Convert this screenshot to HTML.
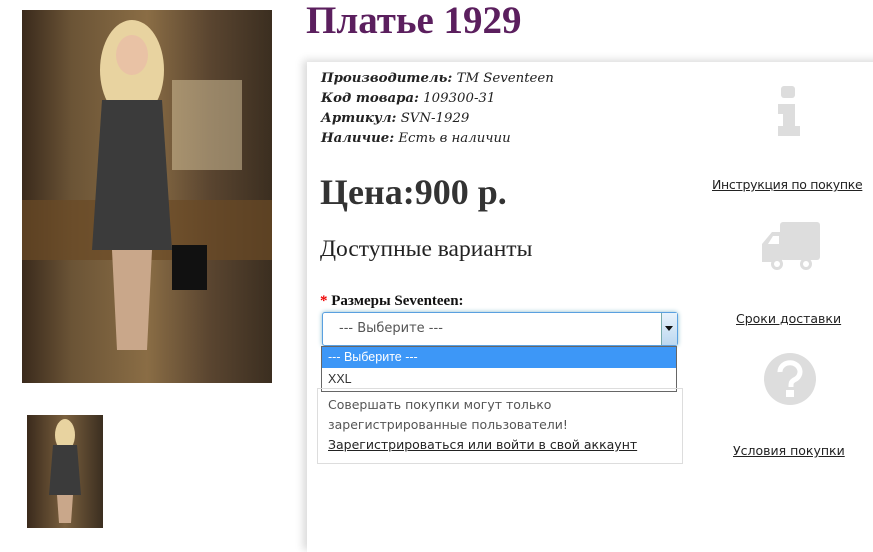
<!DOCTYPE html><html><head><meta charset="utf-8"><style>
body{margin:0;width:873px;height:540px;overflow:hidden;background:#fff;font-family:"Liberation Sans",sans-serif;position:relative}
.a{position:absolute}
.photo{left:22px;top:10px;width:250px;height:373px;background:linear-gradient(90deg,#3a2a1c 0%,#6b5436 20%,#8a6d45 50%,#5a4530 75%,#3b2e20 100%)}
.thumb{left:27px;top:415px;width:76px;height:113px;background:linear-gradient(90deg,#3a2a1c,#7a603e 50%,#3b2e20)}
h1{position:absolute;left:306px;top:-2px;margin:0;font:bold 39px "Liberation Serif",serif;color:#5b1f5e}
.panel{left:307px;top:62px;width:580px;height:490px;background:#fff;box-shadow:-4px -2px 8px rgba(0,0,0,.15)}
.info{left:321px;top:69px;font:italic 13.3px/20px "DejaVu Serif",serif;color:#222}
.info b{font-weight:bold}
.price{left:320px;top:171px;font:bold 36px "Liberation Serif","DejaVu Serif",serif;color:#333}
.var{left:320px;top:236px;font:23.5px "Liberation Serif","DejaVu Serif",serif;color:#222}
.lab{left:320px;top:293px;font:bold 15px "Liberation Serif",serif;color:#111}
.sel{left:322px;top:312px;width:354px;height:32px;border:1px solid #5aa0e0;border-radius:3px;box-shadow:0 0 5px #8bc;background:#fff}
.dd{left:321px;top:346px;width:354px;height:44px;border:1px solid #666;background:#fff;font-size:12.5px}
.box{left:317px;top:388px;width:364px;height:74px;border:1px solid #ddd;font:12.5px/20px "DejaVu Sans",sans-serif;color:#555}
.lk{font:12.5px "DejaVu Sans",sans-serif;color:#222;text-decoration:underline;white-space:nowrap}
</style></head><body>
<div class="a photo"><svg width="250" height="373"><rect x="150" y="70" width="70" height="90" fill="#d9c8a0" opacity=".5"/><rect x="0" y="190" width="250" height="60" fill="#6b4a25" opacity=".7"/><ellipse cx="110" cy="60" rx="32" ry="50" fill="#e8d3a0"/><ellipse cx="110" cy="45" rx="16" ry="20" fill="#e9c2a5"/><path d="M80 90 L140 90 L150 240 L70 240Z" fill="#3b3b3b"/><path d="M90 240 L130 240 L125 340 L95 340Z" fill="#c9a78a"/><rect x="150" y="235" width="35" height="45" fill="#111"/></svg></div>
<div class="a thumb"><svg width="76" height="113"><ellipse cx="38" cy="20" rx="10" ry="16" fill="#e8d3a0"/><path d="M26 30 L50 30 L54 80 L22 80Z" fill="#3b3b3b"/><path d="M30 80 L46 80 L44 108 L32 108Z" fill="#c9a78a"/></svg></div>
<h1>Платье 1929</h1>
<div class="a panel"></div>
<div class="a info"><b>Производитель:</b> TM Seventeen<br><b>Код товара:</b> 109300-31<br><b>Артикул:</b> SVN-1929<br><b>Наличие:</b> Есть в наличии</div>
<div class="a price">Цена:900 р.</div>
<div class="a var">Доступные варианты</div>
<div class="a lab"><span style="color:#e00">*</span> Размеры Seventeen:</div>
<div class="a sel"><span class="a" style="left:16px;top:8px;font:13px 'DejaVu Sans',sans-serif;color:#555">--- Выберите ---</span><div class="a" style="right:0;top:0;width:15px;height:32px;background:linear-gradient(#e8f2fb,#bcd8f0);border-left:1px solid #7aa"><div class="a" style="left:3px;top:13px;border:4px solid transparent;border-top:5px solid #111"></div></div></div>
<div class="a dd"><div style="background:#3d97f7;color:#fff;height:21px;line-height:21px;padding-left:6px">--- Выберите ---</div><div style="height:21px;line-height:22px;padding-left:6px;color:#333">XXL</div></div>
<div class="a box"><div style="padding:6px 10px 0">Совершать покупки могут только<br>зарегистрированные пользователи!<br><span class="lk">Зарегистрироваться или войти в свой аккаунт</span></div></div>
<svg class="a" style="left:778px;top:86px" width="26" height="50"><rect x="3" y="0" width="14" height="12" rx="3" fill="#ddd"/><path d="M0 18h17v22h5v10H0v-10h5v-12H0z" fill="#ddd"/></svg>
<div class="a lk" style="left:712px;top:177px;letter-spacing:-.3px">Инструкция по покупке</div>
<svg class="a" style="left:760px;top:222px" width="62" height="50"><rect x="20" y="0" width="40" height="38" rx="3" fill="#ddd"/><path d="M2 40L2 22L12 10H22V40Z" fill="#ddd"/><path d="M8 22L13 14H19V22Z" fill="#fff"/><circle cx="17" cy="42" r="6" fill="#ddd"/><circle cx="17" cy="42" r="3" fill="#fff"/><circle cx="46" cy="42" r="6" fill="#ddd"/><circle cx="46" cy="42" r="3" fill="#fff"/></svg>
<div class="a lk" style="left:736px;top:311px">Сроки доставки</div>
<svg class="a" style="left:763px;top:352px" width="54" height="54"><circle cx="27" cy="27" r="26" fill="#ddd"/><path d="M17 20a10 9 0 1 1 14 8c-3 2-3 3-3 7" stroke="#fff" stroke-width="5" fill="none"/><rect x="23" y="38" width="8" height="7" fill="#fff"/></svg>
<div class="a lk" style="left:733px;top:443px">Условия покупки</div>
</body></html>
